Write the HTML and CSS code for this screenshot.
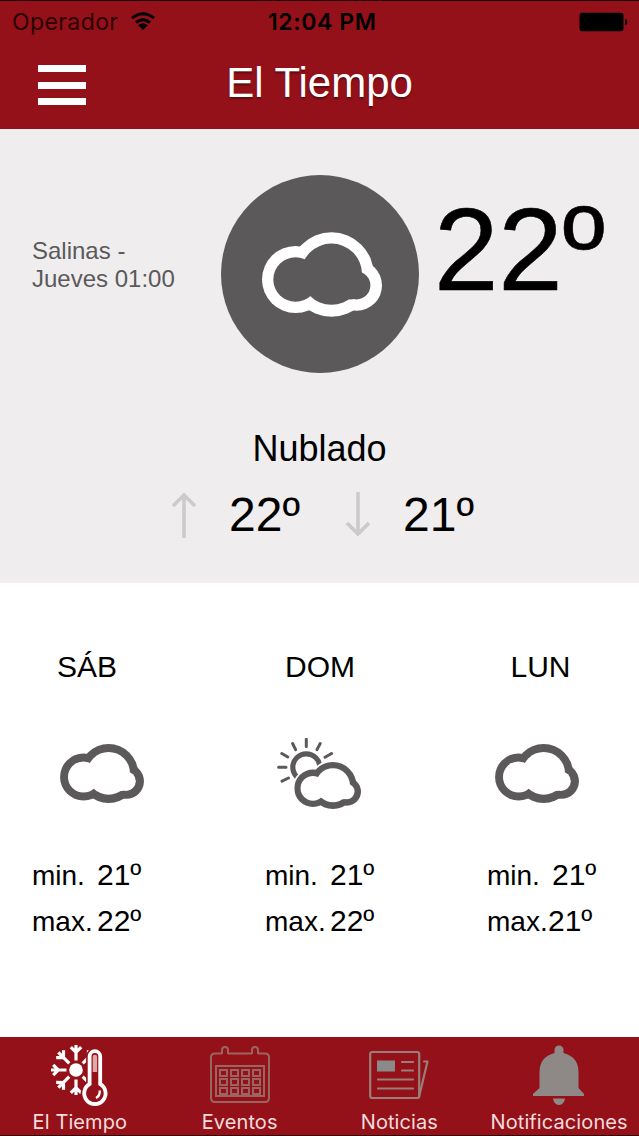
FILE: index.html
```html
<!DOCTYPE html>
<html lang="es">
<head>
    <meta charset="UTF-8">
    <meta name="viewport" content="width=device-width, initial-scale=1.0">
    <title>El Tiempo</title>
    <link rel="stylesheet" href="styles.css">
</head>
<body>
    <!-- Shared cloud shape -->
    <svg class="defs" width="0" height="0">
        <symbol id="cloud" viewBox="0 0 361 254">
            <g class="cloud-line">
                <circle cx="101" cy="142" r="101"/>
                <circle cx="209" cy="127" r="127"/>
                <circle cx="285" cy="160" r="76"/>
            </g>
            <g class="cloud-fill">
                <circle cx="101" cy="142" r="67"/>
                <circle cx="209" cy="126" r="92"/>
                <circle cx="284" cy="160" r="42"/>
                <circle cx="266" cy="167" r="35"/>
            </g>
        </symbol>
    </svg>

    <div class="app">
        <header>
            <div class="status-bar">
                <span class="carrier">Operador</span>
                <svg class="wifi" width="26" height="19" viewBox="0 0 26 19">
                    <path d="M2 6.2Q13 -2.8 24 6.2M6 10.6Q13 4.8 20 10.6" fill="none" stroke="#000" stroke-width="2.9"/>
                    <path d="M8.2 13.2Q13 9.2 17.8 13.2L13 18Z"/>
                </svg>
                <span class="time">12:04 PM</span>
                <svg class="battery" width="49" height="20" viewBox="0 0 49 20">
                    <rect x="0.5" y="0.8" width="44" height="18.4" rx="3"/>
                    <path d="M46 7Q48.4 7.5 48.4 10T46 13Z"/>
                </svg>
            </div>
            <div class="nav-bar">
                <button class="menu-btn" aria-label="Menú">
                    <span></span>
                    <span></span>
                    <span></span>
                </button>
                <h1>El Tiempo</h1>
            </div>
        </header>

        <section class="current">
            <div class="current-top">
                <p class="place">Salinas -<br>Jueves 01:00</p>
                <div class="badge">
                    <svg width="120" height="85"><use href="#cloud"/></svg>
                </div>
                <div class="temp">22<span>º</span></div>
            </div>
            <h2>Nublado</h2>
            <div class="range">
                <svg width="26" height="46" viewBox="0 0 26 46">
                    <path d="M13 46V2M2 14L13 3L24 14"/>
                </svg>
                <span class="high">22º</span>
                <svg width="26" height="46" viewBox="0 0 26 46">
                    <path d="M13 0V43M2 31L13 42L24 31"/>
                </svg>
                <span>21º</span>
            </div>
        </section>

        <section class="forecast">
            <div class="day">
                <h3>SÁB</h3>
                <div class="day-icon first">
                    <svg width="84" height="59"><use href="#cloud"/></svg>
                </div>
                <div class="row"><span>min.</span><b>21º</b></div>
                <div class="row"><span>max.</span><b>22º</b></div>
            </div>
            <div class="day">
                <h3>DOM</h3>
                <div class="day-icon sunny">
                    <svg width="84" height="72" viewBox="0 0 84 72">
                        <circle class="sun" cx="29.3" cy="29.3" r="13.5"/>
                        <path class="rays" d="M29.3 1.3V8.5M15.6 5.5L18.6 11.6M43.2 5.5L40 11.6M4.8 15.5L10.8 19M54.6 15.5L48 19.2M1.6 29.3H9M5 43.2L11.5 40"/>
                        <g class="cloud-halo">
                            <circle cx="36" cy="50.5" r="20.6"/>
                            <circle cx="56" cy="47.5" r="25.4"/>
                        </g>
                        <use href="#cloud" x="17.3" y="24" width="66.7" height="47"/>
                    </svg>
                </div>
                <div class="row"><span>min.</span><b>21º</b></div>
                <div class="row"><span>max.</span><b>22º</b></div>
            </div>
            <div class="day">
                <h3 class="shifted">LUN</h3>
                <div class="day-icon last">
                    <svg width="84" height="59"><use href="#cloud"/></svg>
                </div>
                <div class="row"><span>min.</span><b>21º</b></div>
                <div class="row tight"><span>max.</span><b>21º</b></div>
            </div>
        </section>

        <nav class="tabs">
            <a class="tab active">
                <svg width="60" height="64" viewBox="0 0 60 64">
                    <circle cx="26" cy="26" r="6.8" fill="#fff"/>
                    <g fill="none" stroke="#fff" stroke-width="3.2">
                        <g id="arm"><path d="M26 16.5V1M20.8 3.2L26 8.2L31.2 3.2"/></g>
                        <use href="#arm" transform="rotate(45 26 26)"/>
                        <use href="#arm" transform="rotate(135 26 26)"/>
                        <use href="#arm" transform="rotate(180 26 26)"/>
                        <use href="#arm" transform="rotate(225 26 26)"/>
                        <use href="#arm" transform="rotate(270 26 26)"/>
                        <use href="#arm" transform="rotate(315 26 26)"/>
                    </g>
                    <path d="M39.6 40V12.5a5.3 5.3 0 0 1 10.6 0V40A10.7 10.7 0 1 1 39.6 40Z" fill="#951119" stroke="#951119" stroke-width="7"/>
                    <path d="M39.6 40V12.5a5.3 5.3 0 0 1 10.6 0V40A10.7 10.7 0 1 1 39.6 40Z" fill="#951119" stroke="#fff" stroke-width="3.8"/>
                    <path d="M42.7 28V13a2.2 2.2 0 0 1 4.4 0V28Z" fill="#dfa9a9"/>
                    <path d="M46 54Q50 52 49.8 46.5" fill="none" stroke="#fff" stroke-width="2.4"/>
                </svg>
                <span>El Tiempo</span>
            </a>
            <a class="tab">
                <svg width="60" height="64" viewBox="0 0 60 64">
                    <g fill="none" stroke="#9a6560" stroke-width="2">
                        <path d="M12 9.5H5Q1 9.5 1 13.5V54Q1 58 5 58H55Q59 58 59 54V13.5Q59 9.5 55 9.5H48M18 9.5H42"/>
                        <path d="M12 10V6a3 3 0 0 1 6 0V10M42 10V6a3 3 0 0 1 6 0V10"/>
                        <path d="M6 22H54V52H6Z"/>
                        <path d="M10 26h7v6h-7zM21 26h7v6h-7zM32 26h7v6h-7zM43 26h7v6h-7zM10 35h7v6h-7zM21 35h7v6h-7zM32 35h7v6h-7zM43 35h7v6h-7zM10 44h7v6h-7zM21 44h7v6h-7zM32 44h7v6h-7zM43 44h7v6h-7z"/>
                    </g>
                </svg>
                <span>Eventos</span>
            </a>
            <a class="tab">
                <svg width="60" height="64" viewBox="0 0 60 64">
                    <g fill="none" stroke="#9a7e7a" stroke-width="2.2" stroke-linecap="round" stroke-linejoin="round">
                        <rect x="1.2" y="8" width="49" height="46" rx="2"/>
                        <path d="M33 18H44M33 26.5H44M9 35.5H44M9 44.5H44"/>
                        <path d="M50 53L58.5 17.5H55"/>
                    </g>
                    <rect x="8" y="16.5" width="18" height="11" fill="#8a8a8a"/>
                </svg>
                <span>Noticias</span>
            </a>
            <a class="tab">
                <svg width="60" height="64" viewBox="0 0 60 64" fill="#8e8987">
                    <path d="M25.5 9V6a4.5 4.5 0 0 1 9 0V9Q49.5 13 49.5 28V44L55 50V52H4V50L10.5 44V28Q10.5 13 25.5 9Z"/>
                    <path d="M24 54.5H36Q35 61 30 61T24 54.5Z"/>
                </svg>
                <span>Notificaciones</span>
            </a>
        </nav>
    </div>
</body>
</html>
```
FILE: styles.css
```css
:root {
    --red: #951119;
    --gray: #5b595a;
    --light: #efedee;
}

* {
    box-sizing: border-box;
}

body {
    margin: 0;
    font-family: "Liberation Sans", Helvetica, Arial, sans-serif;
    color: #000;
    background: #fff;
}

h1, h2, h3, p {
    margin: 0;
    font-weight: 400;
}

svg {
    display: block;
    flex-shrink: 0;
}

.defs {
    position: absolute;
}

.app {
    display: flex;
    flex-direction: column;
    width: 639px;
    height: 1136px;
    overflow: hidden;
}

/* Header */
header {
    height: 129px;
    background: var(--red);
    border-top: 1px solid #1c0003;
}

.status-bar {
    display: grid;
    grid-template-columns: 118px 138px 1fr 49px;
    align-items: center;
    height: 41px;
    padding: 0 11px 0 12px;
    font-family: Inter, Roboto, sans-serif;
    font-size: 23px;
}

.carrier {
    color: #2a0003;
    letter-spacing: 0.4px;
}

.time {
    font-weight: 600;
    letter-spacing: 0.6px;
}

.nav-bar {
    display: grid;
    grid-template-columns: 48px 1fr 48px;
    align-items: center;
    height: 86px;
    padding: 0 38px;
}

.menu-btn {
    display: flex;
    flex-direction: column;
    gap: 9.5px;
    padding: 0;
    border: none;
    background: none;
}

.menu-btn span {
    height: 7px;
    background: #fff;
}

h1 {
    padding-bottom: 4px;
    color: #fff;
    font-size: 42px;
    line-height: 48px;
    text-align: center;
    text-shadow: 0 2px 2px rgba(0, 0, 0, 0.4);
}

/* Current weather */
.current {
    height: 454px;
    background: var(--light);
}

.current-top {
    display: grid;
    grid-template-columns: 189px 198px 1fr;
    padding: 46px 0 0 32px;
}

.place {
    padding-top: 62px;
    color: var(--gray);
    font-size: 24px;
    line-height: 28px;
}

.badge {
    display: flex;
    justify-content: center;
    align-items: center;
    width: 198px;
    height: 198px;
    padding-left: 3px;
    border-radius: 50%;
    background: var(--gray);
}

.badge svg {
    --line: #fff;
    --fill: var(--gray);
}

.cloud-line {
    fill: var(--line, #5b595a);
}

.cloud-fill {
    fill: var(--fill, #fff);
}

.temp {
    padding: 10px 0 0 15px;
    font-size: 116px;
    line-height: 130px;
    letter-spacing: -0.3px;
    -webkit-text-stroke: 0.6px #000;
}

.temp span {
    vertical-align: 3px;
    line-height: 1;
}

h2 {
    margin-top: 56px;
    font-size: 36px;
    line-height: 40px;
    text-align: center;
}

.range {
    display: flex;
    align-items: center;
    padding: 18px 0 0 171px;
    font-size: 48px;
    line-height: 56px;
}

.range path {
    fill: none;
    stroke: #cbcbcb;
    stroke-width: 3.6;
}

.range span {
    margin-left: 32px;
}

.range .high {
    width: 116px;
}

/* Forecast */
.forecast {
    display: grid;
    grid-template-columns: 233px 222px 110px;
    flex: 1;
    padding: 66px 0 0 32px;
}

.day {
    width: 110px;
}

h3 {
    font-size: 30px;
    line-height: 36px;
    text-align: center;
}

h3.shifted {
    padding-right: 3px;
}

.day-icon {
    display: flex;
    justify-content: center;
    align-items: center;
    height: 72px;
    margin: 52px 0 43px;
}

.day-icon.first {
    padding-left: 30px;
}

.day-icon.sunny {
    height: 73px;
    margin-bottom: 42px;
    padding: 1px 3px 0 0;
}

.day-icon.last {
    padding-right: 10px;
}

.cloud-halo {
    fill: #fff;
}

.sun {
    fill: none;
    stroke: var(--gray);
    stroke-width: 5.2;
}

.rays {
    stroke: var(--gray);
    stroke-width: 3;
    stroke-linecap: round;
}

.row {
    display: flex;
    align-items: baseline;
    height: 46px;
    font-size: 28px;
    line-height: 46px;
    white-space: nowrap;
}

.row span {
    width: 65px;
}

.row b {
    font-size: 30px;
    font-weight: 400;
}

.row.tight span {
    width: 61px;
}

/* Bottom tabs */
.tabs {
    display: grid;
    grid-template-columns: repeat(4, 1fr);
    height: 99px;
    background: var(--red);
    border-bottom: 1px solid #2b0004;
}

.tab {
    display: flex;
    flex-direction: column;
    align-items: center;
    padding-top: 7px;
    color: #f3dcdc;
    font-family: Inter, Roboto, sans-serif;
    font-size: 20px;
    line-height: 24px;
    letter-spacing: 0.1px;
}

.tab span {
    margin-top: 2px;
}
```
